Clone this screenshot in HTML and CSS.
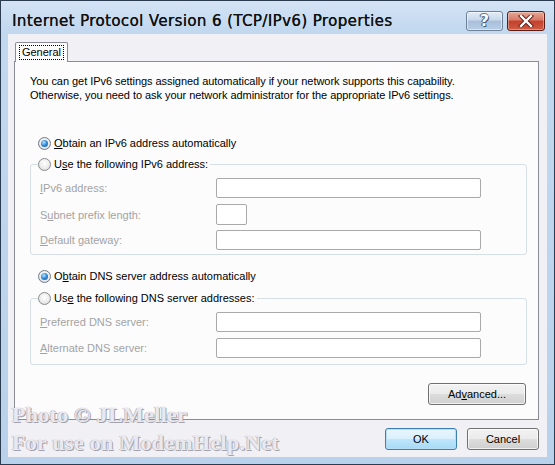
FILE: index.html
```html
<!DOCTYPE html>
<html>
<head>
<meta charset="utf-8">
<link rel="stylesheet" href="styles.css">
</head>
<body>
<div class="window">
  <div class="titlebar">
    <div class="title">Internet Protocol Version 6 (TCP/IPv6) Properties</div>
    <div class="caption-buttons">
      <div class="cbtn help"><span class="q">?</span></div>
      <div class="cbtn close">
        <svg width="16" height="12" viewBox="0 0 16 12"><path d="M3 1 L13 11 M13 1 L3 11" stroke="#5a1a10" stroke-width="4.2" stroke-linecap="square"/><path d="M3 1 L13 11 M13 1 L3 11" stroke="#fff" stroke-width="2.4" stroke-linecap="square"/></svg>
      </div>
    </div>
  </div>
  <div class="client">
    <div class="tabs"><div class="tab"><span class="focus">General</span></div></div>
    <div class="panel">
      <p class="intro">You can get IPv6 settings assigned automatically if your network supports this capability.<br>Otherwise, you need to ask your network administrator for the appropriate IPv6 settings.</p>
      <div class="radio-row r1"><span class="radio checked"></span><span><u>O</u>btain an IPv6 address automatically</span></div>
      <fieldset class="group g1">
        <legend><span class="radio"></span><span>U<u>s</u>e the following IPv6 address:</span></legend>
        <div class="field-row"><span class="lbl"><u>I</u>Pv6 address:</span><span class="input wide"></span></div>
        <div class="field-row"><span class="lbl">S<u>u</u>bnet prefix length:</span><span class="input short"></span></div>
        <div class="field-row"><span class="lbl"><u>D</u>efault gateway:</span><span class="input wide"></span></div>
      </fieldset>
      <div class="radio-row r3"><span class="radio checked"></span><span>O<u>b</u>tain DNS server address automatically</span></div>
      <fieldset class="group g2">
        <legend><span class="radio"></span><span>Us<u>e</u> the following DNS server addresses:</span></legend>
        <div class="field-row"><span class="lbl"><u>P</u>referred DNS server:</span><span class="input wide"></span></div>
        <div class="field-row"><span class="lbl"><u>A</u>lternate DNS server:</span><span class="input wide"></span></div>
      </fieldset>
      <div class="adv-row"><div class="btn adv">Ad<u>v</u>anced...</div></div>
    </div>
    <div class="footer">
      <div class="btn default">OK</div>
      <div class="btn">Cancel</div>
    </div>
  </div>
  <div class="watermark">Photo © JLMeller<br>For use on ModemHelp.Net</div>
</div>
</body>
</html>
```
FILE: styles.css
```css
* { box-sizing: border-box; }
body {
  margin: 0;
  width: 555px;
  height: 465px;
  overflow: hidden;
  font-family: "Liberation Sans", Arial, sans-serif;
  font-size: 11px;
  color: #000;
}
.window {
  position: relative;
  width: 555px;
  height: 465px;
  border: 1px solid #2c3c50;
  background: linear-gradient(#d3e3f4, #c2d8ef 30px, #b9d1ea);
  display: flex;
  flex-direction: column;
  padding: 0 7px 7px 7px;
}
.titlebar {
  height: 33px;
  display: flex;
  justify-content: space-between;
  align-items: flex-start;
}
.title {
  margin: 11px 0 0 4px;
  font-family: "DejaVu Sans", sans-serif;
  font-size: 15px;
  line-height: 18px;
  color: #111;
  letter-spacing: 0.4px;
  text-shadow: 0.3px 0 0 #111;
}
.caption-buttons {
  display: flex;
  gap: 4px;
  margin: 10px 2px 0 0;
}
.cbtn {
  width: 37px;
  height: 20px;
  border-radius: 3px;
  display: flex;
  align-items: center;
  justify-content: center;
}
.help {
  border: 1px solid #6e8098;
  background: linear-gradient(#e3ecf7, #c7d7ea 45%, #a9bfda 50%, #b8cde5);
  box-shadow: inset 0 0 0 1px rgba(255,255,255,0.5);
}
.help .q {
  font-family: "DejaVu Sans", sans-serif;
  font-weight: bold;
  font-size: 16px;
  color: #fff;
  text-shadow: 0 0 1px #34465e, 1px 1px 0 #4a5d78, -1px 0 0 #4a5d78, 0 -1px 0 #6a7d98;
  line-height: 18px;
}
.close {
  width: 38px;
  border: 1px solid #5b1c14;
  background: linear-gradient(#e8a596, #d77a66 45%, #c4402b 50%, #cf5c43);
  box-shadow: inset 0 0 0 1px rgba(255,255,255,0.35);
}
.client {
  flex: 1;
  background: #f1f0f4;
  padding: 8px 8px 7px 6px;
  display: flex;
  flex-direction: column;
}
.tabs {
  display: flex;
  height: 19px;
  position: relative;
  z-index: 1;
}
.tab {
  width: 53px;
  height: 20px;
  margin-left: 1px;
  border: 1px solid #898c95;
  border-bottom: none;
  border-radius: 2px 2px 0 0;
  background: #fcfcfc;
  display: flex;
  align-items: flex-start;
  justify-content: center;
  padding-top: 2px;
}
.focus {
  border: 1px dotted #000;
  padding: 0 2px;
  line-height: 13px;
}
.panel {
  width: 525px;
  height: 359px;
  border: 1px solid #898c95;
  background: #fcfcfd;
  padding: 12px 11px 0 15px;
  display: flex;
  flex-direction: column;
}
.intro {
  margin: 0;
  line-height: 14px;
  letter-spacing: -0.05px;
}
.radio-row {
  display: flex;
  align-items: center;
  height: 16px;
  margin-left: 8px;
  gap: 3px;
}
.r1 { margin-top: 33px; }
.r3 { margin-top: 13px; }
.radio {
  width: 13px;
  height: 13px;
  flex: none;
  border-radius: 50%;
  border: 1px solid #8a8c8e;
  background: radial-gradient(circle at 50% 40%, #ffffff, #ececec 55%, #d2d2d2);
  position: relative;
  display: inline-block;
}
.radio.checked {
  border-color: #6f7a86;
}
.radio.checked::after {
  content: "";
  position: absolute;
  left: 2px;
  top: 2px;
  width: 7px;
  height: 7px;
  border-radius: 50%;
  background: radial-gradient(circle at 40% 35%, #b5e3ff, #2f86d6 50%, #164f8f);
}
.group {
  margin: 5px 0 0 0;
  border: 1px solid #d5dfe5;
  border-radius: 3px;
  padding: 0 0 4px 9px;
  min-width: 0;
}
.group legend {
  display: flex;
  align-items: center;
  gap: 3px;
  height: 16px;
  padding: 0 2px 0 0;
  margin-left: -2px;
  color: #000;
}
.field-row {
  display: grid;
  grid-template-columns: 176px auto;
  align-items: center;
  height: 20px;
  margin-top: 6px;
  color: #a3a3a3;
}
.input {
  display: block;
  height: 20px;
  border: 1px solid #a9a9a9;
  border-radius: 2px;
  background: #fff;
}
.input.wide { width: 265px; }
.input.short { width: 31px; height: 21px; }
.g2 { margin-top: 6px; padding-bottom: 6px; }
.adv-row {
  display: flex;
  justify-content: flex-end;
  margin-top: 18px;
  padding-right: 1px;
}
.btn {
  height: 22px;
  border: 1px solid #707070;
  border-radius: 3px;
  background: linear-gradient(#f2f2f2, #ebebeb 48%, #dddddd 52%, #cfcfcf);
  box-shadow: inset 0 0 0 1px rgba(255,255,255,0.7);
  display: flex;
  align-items: center;
  justify-content: center;
  width: 72px;
}
.btn.adv { width: 98px; }
.btn.default {
  border-color: #3c7fb1;
  background: linear-gradient(#eaf6fd, #d9f0fc 48%, #bee6fd 52%, #a7d9f5);
  box-shadow: inset 0 0 0 1px #b5dff6;
}
.footer {
  display: flex;
  justify-content: flex-end;
  gap: 10px;
  margin-top: 8px;
}
.watermark {
  position: absolute;
  left: 11px;
  top: 400px;
  font-family: "Liberation Serif", serif;
  font-weight: bold;
  font-size: 22px;
  line-height: 28px;
  letter-spacing: 0.3px;
  color: #eae9f0;
  text-shadow: 1px 1px 0 #a4a3ad, -1px 0 0 #c6c5cd, 0 0 1px #9c9ba5;
  pointer-events: none;
}
```
